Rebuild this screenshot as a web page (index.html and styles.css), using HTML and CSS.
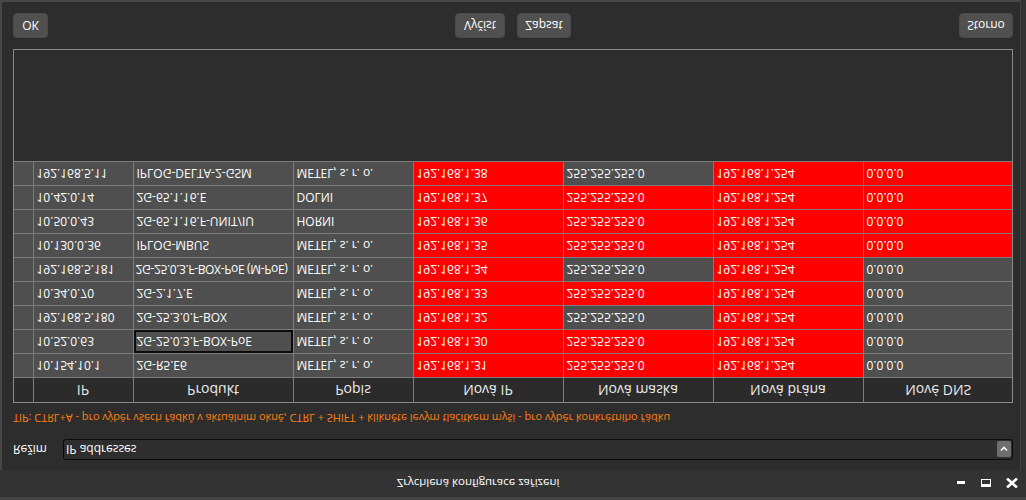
FILE: index.html
```html
<!DOCTYPE html>
<html lang="cs">
<head>
<meta charset="utf-8">
<title>Zrychlená konfigurace zařízení</title>
<link rel="stylesheet" href="styles.css">
</head>
<body>
<div class="window">
  <div class="titlebar">
    <div class="title">Zrychlená konfigurace zařízení</div>
    <div class="controls">
      <svg class="ctl" width="10" height="10" viewBox="0 0 10 10"><rect x="1" y="4" width="8" height="3" fill="#fff"/></svg>
      <svg class="ctl" width="10" height="10" viewBox="0 0 10 10"><rect x="0.5" y="1.5" width="9" height="7" fill="none" stroke="#fff" stroke-width="1"/><rect x="0" y="1" width="10" height="3" fill="#fff"/></svg>
      <svg class="ctl" width="12" height="10" viewBox="0 0 12 10"><path d="M1 0.5 L11 9.5 M11 0.5 L1 9.5" stroke="#fff" stroke-width="2.6"/></svg>
    </div>
  </div>
  <div class="main">
    <div class="mode-row">
      <span class="mode-label">Režim</span>
      <div class="combo">
        <span class="combo-text">IP addresses</span>
        <span class="combo-btn"><svg width="8" height="6" viewBox="0 0 8 6"><path d="M1 1.5 L4 4.5 L7 1.5" fill="none" stroke="#fff" stroke-width="1.6"/></svg></span>
      </div>
    </div>
    <div class="tip">TIP: CTRL+A - pro výběr všech řádků v aktuálním okně, CTRL + SHIFT + klikněte levým tlačítkem myši - pro výběr konkrétního řádku</div>
    <div class="grid-wrap">
      <table class="grid">
        <colgroup>
          <col class="c-rh"><col class="c-ip"><col class="c-prod"><col class="c-pop"><col class="c-w"><col class="c-w"><col class="c-w"><col class="c-w">
        </colgroup>
        <thead>
          <tr><th></th><th>IP</th><th>Produkt</th><th>Popis</th><th>Nová IP</th><th>Nová maska</th><th>Nová brána</th><th>Nové DNS</th></tr>
        </thead>
        <tbody>
          <tr><td></td><td>10.154.10.1</td><td>2G-R5.E6</td><td>METEL, s. r. o.</td><td class="r">192.168.1.31</td><td class="r">255.255.255.0</td><td class="r">192.168.1.254</td><td>0.0.0.0</td></tr>
          <tr><td></td><td>10.52.0.63</td><td class="sel">2G-25.0.3.F-BOX-PoE</td><td>METEL, s. r. o.</td><td class="r">192.168.1.30</td><td class="r">255.255.255.0</td><td class="r">192.168.1.254</td><td>0.0.0.0</td></tr>
          <tr><td></td><td>192.168.5.180</td><td>2G-25.3.0.F-BOX</td><td>METEL, s. r. o.</td><td class="r">192.168.1.32</td><td>255.255.255.0</td><td class="r">192.168.1.254</td><td>0.0.0.0</td></tr>
          <tr><td></td><td>10.34.0.70</td><td>2G-2.1.7.E</td><td>METEL, s. r. o.</td><td class="r">192.168.1.33</td><td class="r">255.255.255.0</td><td class="r">192.168.1.254</td><td>0.0.0.0</td></tr>
          <tr><td></td><td>192.168.5.181</td><td class="tight">2G-25.0.3.F-BOX-PoE (M-PoE)</td><td>METEL, s. r. o.</td><td class="r">192.168.1.34</td><td>255.255.255.0</td><td class="r">192.168.1.254</td><td>0.0.0.0</td></tr>
          <tr><td></td><td>10.130.0.36</td><td>IPLOG-MBUS</td><td>METEL, s. r. o.</td><td class="r">192.168.1.35</td><td class="r">255.255.255.0</td><td class="r">192.168.1.254</td><td class="r">0.0.0.0</td></tr>
          <tr><td></td><td>10.50.0.43</td><td>2G-65.1.16.F-UNIT/IU</td><td>HORNI</td><td class="r">192.168.1.36</td><td class="r">255.255.255.0</td><td class="r">192.168.1.254</td><td class="r">0.0.0.0</td></tr>
          <tr><td></td><td>10.42.0.14</td><td>2G-65.1.16.E</td><td>DOLNI</td><td class="r">192.168.1.37</td><td class="r">255.255.255.0</td><td class="r">192.168.1.254</td><td class="r">0.0.0.0</td></tr>
          <tr><td></td><td>192.168.5.11</td><td>IPLOG-DELTA-2-GSM</td><td>METEL, s. r. o.</td><td class="r">192.168.1.38</td><td>255.255.255.0</td><td class="r">192.168.1.254</td><td class="r">0.0.0.0</td></tr>
        </tbody>
      </table>
    </div>
    <div class="buttons">
      <div class="left"><button class="btn btn-ok">OK</button></div>
      <div class="center"><button class="btn btn-read">Vyčíst</button><button class="btn btn-write">Zapsat</button></div>
      <div class="right"><button class="btn btn-cancel">Storno</button></div>
    </div>
  </div>
</div>
</body>
</html>
```
FILE: styles.css
```css
html, body {
  margin: 0;
  padding: 0;
  background: #2d2d2d;
}
body {
  width: 1026px;
  height: 500px;
  overflow: hidden;
  font-family: "Open Sans", "Noto Sans", "Lato", sans-serif;
  font-size: 12px;
  color: #fff;
}
.window {
  width: 1026px;
  height: 500px;
  box-sizing: border-box;
  background: #333333;
  border-top: 3px solid #444444;
  display: flex;
  flex-direction: column;
  transform: scaleY(-1);
}
.titlebar {
  height: 27px;
  flex: none;
  display: flex;
  align-items: center;
  background: #333333;
}
.title {
  width: 956px;
  text-align: center;
  font-size: 11.5px;
  color: #fff;
}
.controls {
  flex: 1;
  display: flex;
  align-items: center;
  gap: 15px;
}
.ctl { display: block; }
.main {
  flex: 1;
  background: #2d2d2d;
  border-left: 2px solid #474747;
  border-bottom: 2px solid #474747;
  border-right: 1px solid #424242;
  margin-right: 5px;
  padding: 10px 7px 11px 11px;
  display: flex;
  flex-direction: column;
}
.mode-row {
  display: flex;
  align-items: center;
  height: 21px;
}
.mode-label {
  width: 50px;
  color: #fff;
}
.combo {
  flex: 1;
  height: 21px;
  box-sizing: border-box;
  border: 1px solid #0a0a0a;
  border-radius: 3px;
  background: #2e2e2e;
  display: flex;
  align-items: center;
  justify-content: space-between;
  padding: 0 1px 0 2px;
}
.combo-btn {
  width: 14px;
  height: 16px;
  background: #6e6e6e;
  border-radius: 2px;
  display: flex;
  align-items: center;
  justify-content: center;
}
.tip {
  margin-top: 13px;
  line-height: 16px;
  height: 16px;
  font-size: 10.9px;
  color: #ff7f0f;
  white-space: nowrap;
}
.grid-wrap {
  margin-top: 7px;
  height: 354px;
  box-sizing: border-box;
  border: 1px solid #8a8a8a;
  background: #2d2d2d;
  width: 1000px;
  overflow: hidden;
}
.grid {
  border-collapse: collapse;
  table-layout: fixed;
  width: 999px;
}
.c-rh { width: 19px; }
.c-ip { width: 100px; }
.c-prod { width: 160px; }
.c-pop { width: 120px; }
.c-w { width: 150px; }
.grid th, .grid td {
  height: 24px;
  padding: 0 0 0 3px;
  border: 1px solid #7c7c7c;
  white-space: nowrap;
  overflow: hidden;
  text-overflow: clip;
  box-sizing: border-box;
}
.grid tr > :first-child { border-left: none; }
.grid tr > :last-child { border-right: none; }
.grid thead th {
  border-top: none;
  background: #2b2b2b;
  color: #ececec;
  font-size: 14px;
  font-weight: normal;
  text-align: center;
  padding: 0;
}
.grid td {
  background: #4f4f4f;
  color: #fff;
  text-align: left;
}
.grid td.r { background: #ff0000; }
.grid td.tight { letter-spacing: -0.35px; padding-left: 2px; }
.grid td.sel {
  box-shadow: inset 0 0 0 2px #0c0c0c;
}
.buttons {
  margin-top: 11px;
  display: grid;
  grid-template-columns: 1fr auto 1fr;
  height: 25px;
}
.center { display: flex; gap: 12px; }
.right { display: flex; justify-content: flex-end; }
.btn {
  height: 25px;
  box-sizing: border-box;
  border: 1px solid #4a4a4a;
  border-radius: 4px;
  background: #505050;
  color: #fff;
  font-family: inherit;
  font-size: 12px;
  padding: 0;
  margin: 0;
}
.btn-ok { width: 35px; }
.btn-read { width: 50px; }
.btn-write { width: 54px; }
.btn-cancel { width: 54px; }
```
